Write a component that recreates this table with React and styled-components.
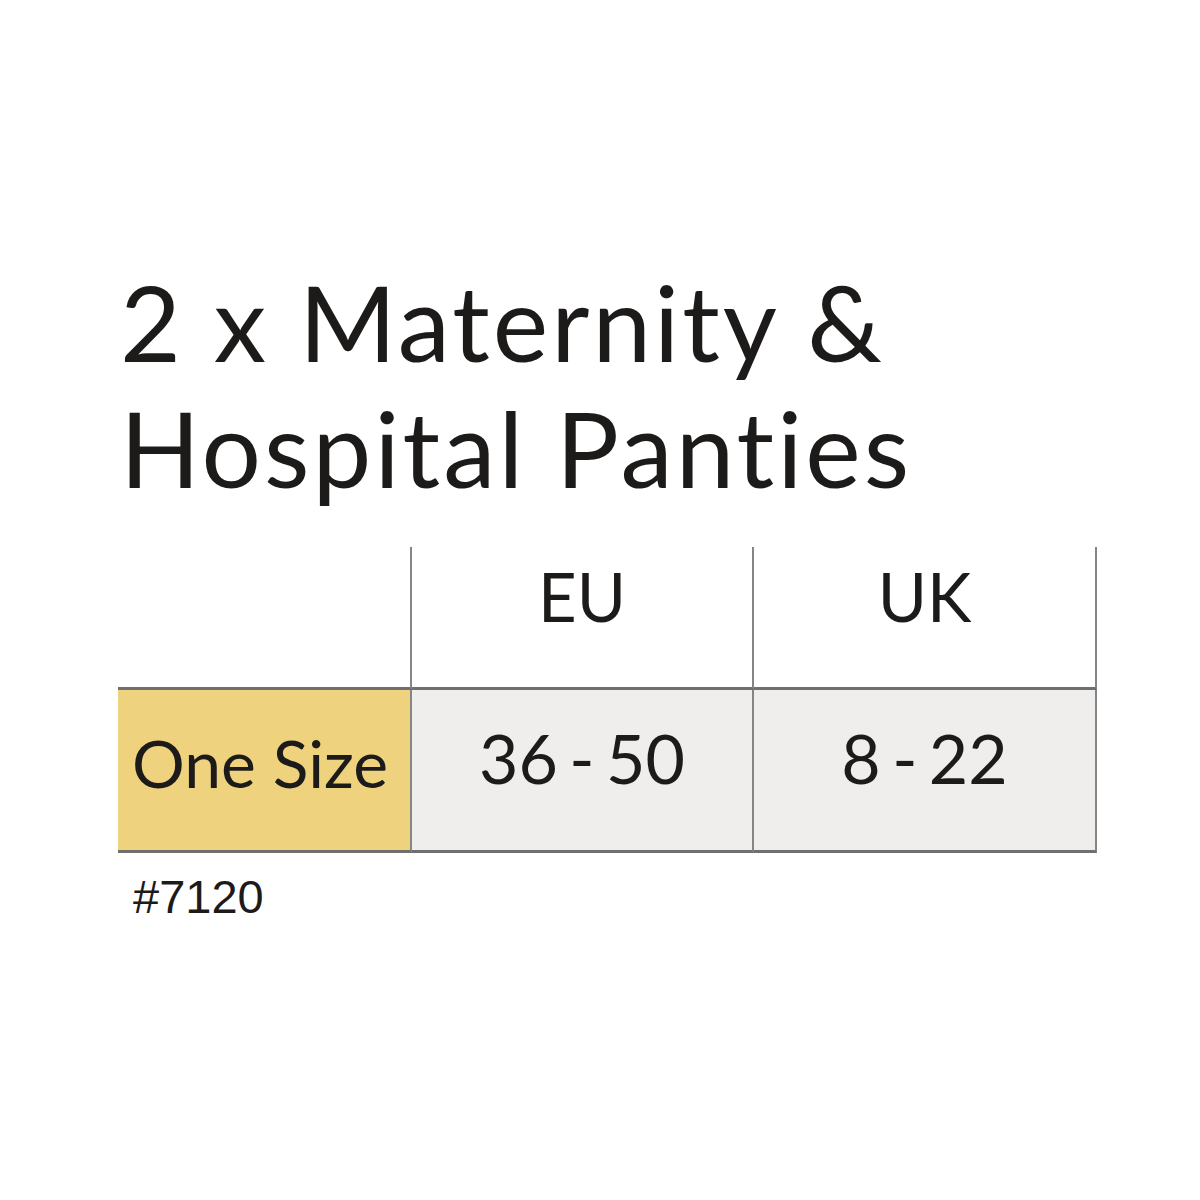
import React from "react";
import styled, { createGlobalStyle } from "styled-components";

const GlobalStyle = createGlobalStyle`
  html, body {
    margin: 0;
    padding: 0;
    background: #ffffff;
  }
`;

const Page = styled.div`
  width: 1200px;
  height: 1200px;
  box-sizing: border-box;
  padding: 258px 0 0 118px;
  color: #1d1b1a;
`;

const Title = styled.h1`
  margin: 0;
  font-family: Lato, "Open Sans", sans-serif;
  font-weight: 400;
  font-size: 105px;
  line-height: 126px;
  letter-spacing: 3px;
  padding-left: 2px;
`;

const Table = styled.div`
  margin-top: 37px;
  display: grid;
  grid-template-columns: 294px 342px 343px;
  grid-template-rows: 143px 163px;
  width: 979px;
`;

const Cell = styled.div`
  box-sizing: border-box;
  display: flex;
  align-items: flex-start;
  justify-content: ${({ $left }) => ($left ? "flex-start" : "center")};
  padding: ${({ $top }) => $top || 0}px 0 0 ${({ $left }) => ($left ? 14 : 0)}px;
  background: ${({ $bg }) => $bg || "transparent"};
  border-right: 2px solid #858585;
  border-bottom: 3px solid #6f6f6f;
  font-family: Lato, "Open Sans", sans-serif;
  font-size: ${({ $size }) => $size}px;
  line-height: 1.2;
  word-spacing: ${({ $tight }) => ($tight ? "-6px" : "normal")};
`;

const Code = styled.div`
  margin-top: 16px;
  padding-left: 15px;
  font-family: "Liberation Sans", Arial, sans-serif;
  font-size: 47px;
  line-height: 56px;
`;

export default function App() {
  return (
    <>
      <GlobalStyle />
      <Page>
        <Title>
          2 x Maternity &amp;
          <br />
          Hospital Panties
        </Title>
        <Table>
          <Cell $size={67} />
          <Cell $size={67} $top={9}>EU</Cell>
          <Cell $size={67} $top={9}>UK</Cell>
          <Cell $left $size={66} $top={33} $bg="#efd27e">
            One Size
          </Cell>
          <Cell $tight $size={68} $top={27} $bg="#efeeec">
            36 - 50
          </Cell>
          <Cell $tight $size={68} $top={27} $bg="#efeeec">
            8 - 22
          </Cell>
        </Table>
        <Code>#7120</Code>
      </Page>
    </>
  );
}
